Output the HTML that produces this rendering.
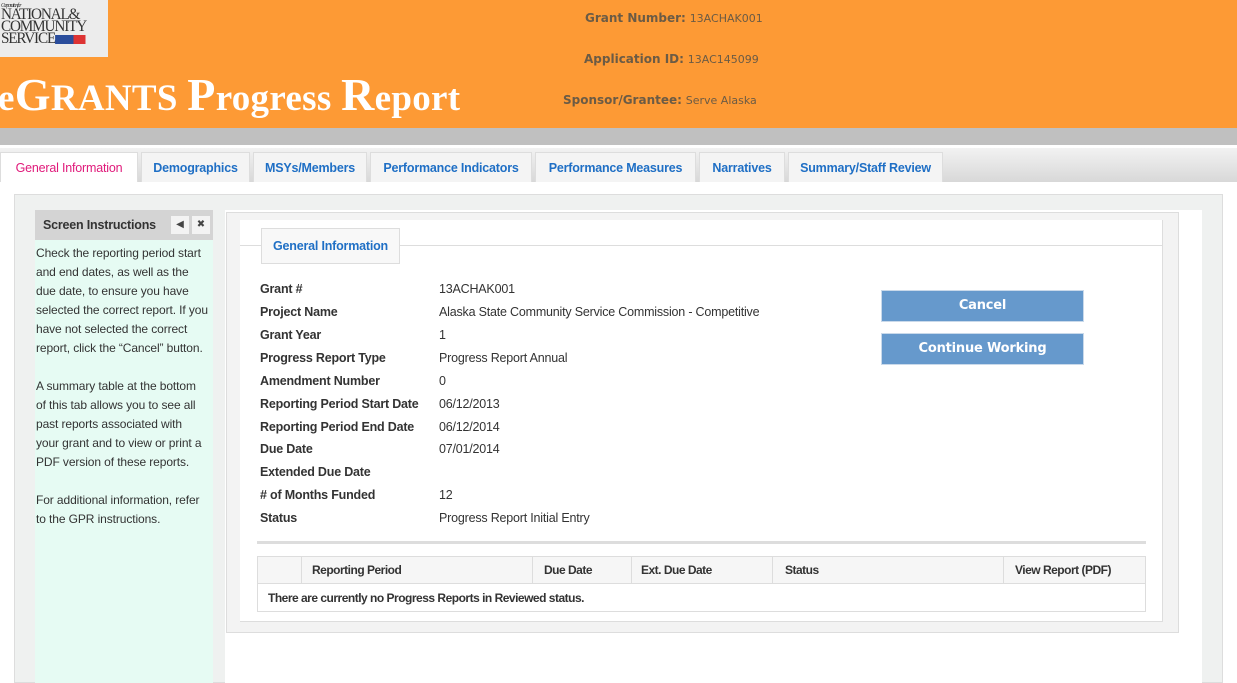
<!DOCTYPE html>
<html><head><meta charset="utf-8"><style>
*{margin:0;padding:0;box-sizing:border-box}
body{width:1237px;height:683px;overflow:hidden;background:#fff;font-family:"Liberation Sans",Arial,sans-serif;position:relative}
.abs{position:absolute}
#hdr{left:0;top:0;width:1237px;height:128px;background:#fd9a35}
#logobg{left:0;top:0;width:108px;height:57px;background:#ececec}
#logo{left:0;top:0;font-family:"Liberation Serif",serif;color:#333;line-height:12px;font-size:16px;padding:3px 0 0 1px;letter-spacing:-1.2px;transform:scaleX(0.95);transform-origin:left}
#title{left:-2px;top:68px;font-family:"Liberation Serif",serif;color:#fff;font-size:37px;font-weight:bold;white-space:nowrap;letter-spacing:0.3px}
.hl{color:#6b5b45;font-size:12px;font-family:"DejaVu Sans",sans-serif;white-space:nowrap}
.hl b{font-weight:bold}
.hl span{font-size:11px}
#gray{left:0;top:128px;width:1237px;height:17px;background:#c0c0c0}
#tabs{left:0;top:148px;width:1237px;height:34px;background:linear-gradient(#f2f2f2,#d8d8d8)}
.tab{position:absolute;top:152px;height:30px;background:#f4f4f4;border:1px solid #ddd;border-bottom:none;color:#1f6fc5;font-weight:bold;font-size:12.5px;text-align:center;line-height:30px;letter-spacing:-0.2px}
#outer{left:14px;top:194px;width:1209px;height:489px;background:#eff1f0;border:1px solid #ddd}
#side{left:35px;top:210px;width:178px;height:473px;background:#e6fbf3}
#sideh{left:35px;top:210px;width:178px;height:30px;background:#d4d4d4;font-weight:bold;font-size:12.5px;color:#333;padding:8px 0 0 8px;letter-spacing:-0.2px}
.ib{position:absolute;top:216px;width:18px;height:18px;background:#f3f3f3;font-size:10px;text-align:center;line-height:18px;color:#444}
#stext{left:36px;top:244px;width:172px;font-size:12px;color:#333;line-height:19px;letter-spacing:-0.1px}
#white{left:225px;top:210px;width:977px;height:473px;background:#fff}
#panel{left:226px;top:212px;width:953px;height:421px;background:#f3f3f3;border:1px solid #ddd}
#inner{left:240px;top:220px;width:923px;height:402px;background:#fff;border-right:1px solid #ddd;border-bottom:1px solid #ddd}
#line{left:240px;top:245px;width:923px;height:1px;background:#ddd}
#gi{left:261px;top:228px;width:139px;height:36px;background:#f8f8f8;border:1px solid #ddd;color:#1f6fc5;font-weight:bold;font-size:12.5px;text-align:center;line-height:34px;letter-spacing:-0.2px}
.lab{position:absolute;left:260px;font-size:12.5px;font-weight:bold;color:#333;letter-spacing:-0.2px}
.val{position:absolute;left:439px;font-size:12.5px;color:#333;letter-spacing:-0.2px}
.btn{position:absolute;left:881px;width:203px;height:32px;background:#6699cc;border:1px solid #c9d9ea;color:#fff;font-weight:bold;font-size:13px;font-family:"DejaVu Sans",sans-serif;text-align:center;line-height:30px;letter-spacing:-0.2px}
#sep{left:257px;top:541px;width:889px;height:3px;background:#ddd}
#tbl{left:257px;top:556px;width:889px;height:56px;border:1px solid #ddd}
#th{left:258px;top:557px;width:887px;height:27px;background:#f6f6f6;border-bottom:1px solid #ddd}
.th{position:absolute;top:563px;font-size:12px;font-weight:bold;color:#333;letter-spacing:-0.5px}
.cb{position:absolute;top:557px;width:1px;height:27px;background:#ddd}
</style></head><body>
<div id="hdr" class="abs"></div>
<div id="logobg" class="abs"></div>
<div id="logo" class="abs"><div style="font-size:6px;line-height:6px;font-style:italic">Corporation for</div>NATIONAL&amp;<br>COMMUNITY<br>SERVICE<span style="display:inline-block;width:32px;height:9px;background:linear-gradient(90deg,#2a4d9c 60%,#d33 60%);vertical-align:middle"></span></div>
<div id="title" class="abs">e<span style="font-size:46px">G</span>RANTS <span style="font-size:46px">P</span>rogress <span style="font-size:46px">R</span>eport</div>
<div class="abs hl" style="left:585px;top:11px"><b>Grant Number:</b> <span>13ACHAK001</span></div>
<div class="abs hl" style="left:584px;top:52px"><b>Application ID:</b> <span>13AC145099</span></div>
<div class="abs hl" style="left:563px;top:93px"><b>Sponsor/Grantee:</b> <span>Serve Alaska</span></div>
<div id="gray" class="abs"></div>
<div id="tabs" class="abs"></div>
<div class="tab" style="left:0;width:138px;background:#fff;color:#e0197a;font-weight:normal">General Information</div>
<div class="tab" style="left:141px;width:109px">Demographics</div>
<div class="tab" style="left:253px;width:114px">MSYs/Members</div>
<div class="tab" style="left:370px;width:162px">Performance Indicators</div>
<div class="tab" style="left:535px;width:161px">Performance Measures</div>
<div class="tab" style="left:699px;width:86px">Narratives</div>
<div class="tab" style="left:788px;width:155px">Summary/Staff Review</div>
<div id="outer" class="abs"></div>
<div id="side" class="abs"></div>
<div id="sideh" class="abs">Screen Instructions</div>
<div class="ib" style="left:171px">&#9664;</div>
<div class="ib" style="left:192px">&#10006;</div>
<div id="stext" class="abs">Check the reporting period start and end dates, as well as the due date, to ensure you have selected the correct report. If you have not selected the correct report, click the “Cancel” button.<br><br>A summary table at the bottom of this tab allows you to see all past reports associated with your grant and to view or print a PDF version of these reports.<br><br>For additional information, refer to the GPR instructions.</div>
<div id="white" class="abs"></div>
<div id="panel" class="abs"></div>
<div id="inner" class="abs"></div>
<div id="line" class="abs"></div>
<div id="gi" class="abs">General Information</div>
<div class="lab" style="top:282px">Grant #</div><div class="val" style="top:282px">13ACHAK001</div>
<div class="lab" style="top:305px">Project Name</div><div class="val" style="top:305px">Alaska State Community Service Commission - Competitive</div>
<div class="lab" style="top:328px">Grant Year</div><div class="val" style="top:328px">1</div>
<div class="lab" style="top:351px">Progress Report Type</div><div class="val" style="top:351px">Progress Report Annual</div>
<div class="lab" style="top:374px">Amendment Number</div><div class="val" style="top:374px">0</div>
<div class="lab" style="top:397px">Reporting Period Start Date</div><div class="val" style="top:397px">06/12/2013</div>
<div class="lab" style="top:420px">Reporting Period End Date</div><div class="val" style="top:420px">06/12/2014</div>
<div class="lab" style="top:442px">Due Date</div><div class="val" style="top:442px">07/01/2014</div>
<div class="lab" style="top:465px">Extended Due Date</div>
<div class="lab" style="top:488px">#&nbsp;of Months Funded</div><div class="val" style="top:488px">12</div>
<div class="lab" style="top:511px">Status</div><div class="val" style="top:511px">Progress Report Initial Entry</div>
<div class="btn" style="top:290px">Cancel</div>
<div class="btn" style="top:333px">Continue Working</div>
<div id="sep" class="abs"></div>
<div id="tbl" class="abs"></div>
<div id="th" class="abs"></div>
<div class="cb" style="left:301px"></div><div class="cb" style="left:532px"></div><div class="cb" style="left:631px"></div><div class="cb" style="left:772px"></div><div class="cb" style="left:1003px"></div>
<div class="th" style="left:312px">Reporting Period</div>
<div class="th" style="left:544px">Due Date</div>
<div class="th" style="left:641px">Ext. Due Date</div>
<div class="th" style="left:785px">Status</div>
<div class="th" style="left:1015px">View Report (PDF)</div>
<div class="th" style="left:268px;top:591px">There are currently no Progress Reports in Reviewed status.</div>
</body></html>
